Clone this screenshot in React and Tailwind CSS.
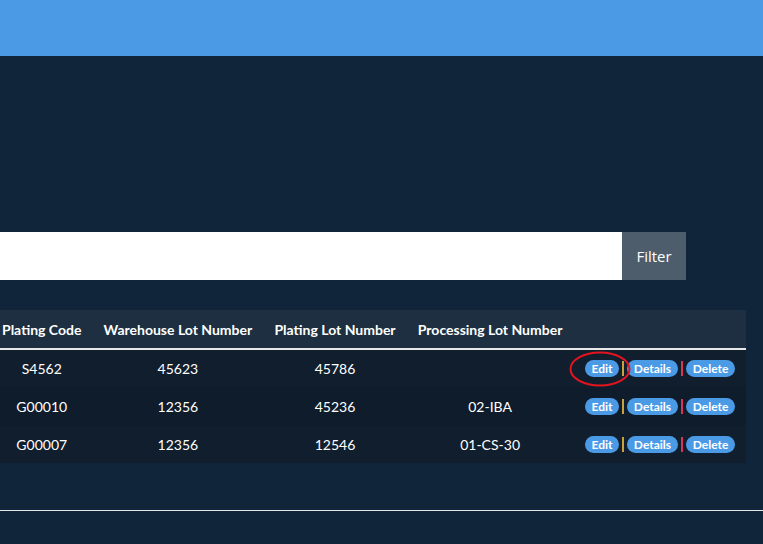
import React from 'react';

const rows = [
  { code: 'S4562', warehouse: '45623', plating: '45786', processing: '' },
  { code: 'G00010', warehouse: '12356', plating: '45236', processing: '02-IBA' },
  { code: 'G00007', warehouse: '12356', plating: '12546', processing: '01-CS-30' },
];

const ActionButton = ({ children, className = '' }) => (
  <button className={`h-[17px] rounded-full bg-[#4a9ae6] text-white text-[12px] font-bold leading-[17px] ${className}`}>
    {children}
  </button>
);

const Actions = ({ marked }) => (
  <div className="relative flex items-center justify-end">
    <ActionButton className="w-[34px]">Edit</ActionButton>
    <span className="mx-[3px] h-[15px] w-[2px] bg-[#c9a23e]" />
    <ActionButton className="w-[51px]">Details</ActionButton>
    <span className="mx-[3px] h-[15px] w-[2px] bg-[#d93355]" />
    <ActionButton className="w-[49px]">Delete</ActionButton>
    {marked && (
      <svg className="absolute left-[-16px] top-[-9px] pointer-events-none" width="62" height="36" viewBox="0 0 62 36">
        <ellipse cx="31" cy="18" rx="29.5" ry="16.5" fill="none" stroke="#e3141f" strokeWidth="2" />
      </svg>
    )}
  </div>
);

export default function App() {
  return (
    <div className="min-h-[544px] bg-[#10243a] text-white" style={{ fontFamily: 'Lato, "Liberation Sans", sans-serif' }}>
      {/* top bar */}
      <div className="h-[56px] bg-[#4a9ae6]" />

      {/* filter form */}
      <div className="mt-[176px] flex h-[48px]">
        <input className="h-full w-[622px] bg-white px-3 text-black outline-none" />
        <button className="h-full w-[64px] bg-[#4d5d6c] text-[15px] text-white" style={{ fontFamily: '"Open Sans", sans-serif' }}>
          Filter
        </button>
      </div>

      {/* table */}
      <table className="mt-[30px] w-[746px] border-collapse text-[14px]">
        <thead>
          <tr className="h-[39px] bg-[#1d2f41] border-b-2 border-[#e8e8e8]">
            <th className="w-[92px] pl-[2px] pr-[11px] text-left font-bold whitespace-nowrap">Plating Code</th>
            <th className="w-[171px] px-[11px] text-center font-bold whitespace-nowrap">Warehouse Lot Number</th>
            <th className="w-[143px] px-[11px] text-center font-bold whitespace-nowrap">Plating Lot Number</th>
            <th className="w-[167px] px-[11px] text-center font-bold whitespace-nowrap">Processing Lot Number</th>
            <th className="px-[11px]" />
          </tr>
        </thead>
        <tbody>
          {rows.map((r, i) => (
            <tr key={r.code} className={`h-[38px] ${i % 2 === 1 ? 'bg-[#0f1c2b]' : 'bg-[#111e2d]'}`}>
              <td className="pl-[2px] pr-[11px] text-center">{r.code}</td>
              <td className="px-[11px] text-center">{r.warehouse}</td>
              <td className="px-[11px] text-center">{r.plating}</td>
              <td className="px-[11px] text-center">{r.processing}</td>
              <td className="pl-[11px] pr-[11px]">
                <Actions marked={i === 0} />
              </td>
            </tr>
          ))}
        </tbody>
      </table>

      <div className="mt-[47px] h-px bg-[#e6e6e6]" />
    </div>
  );
}
